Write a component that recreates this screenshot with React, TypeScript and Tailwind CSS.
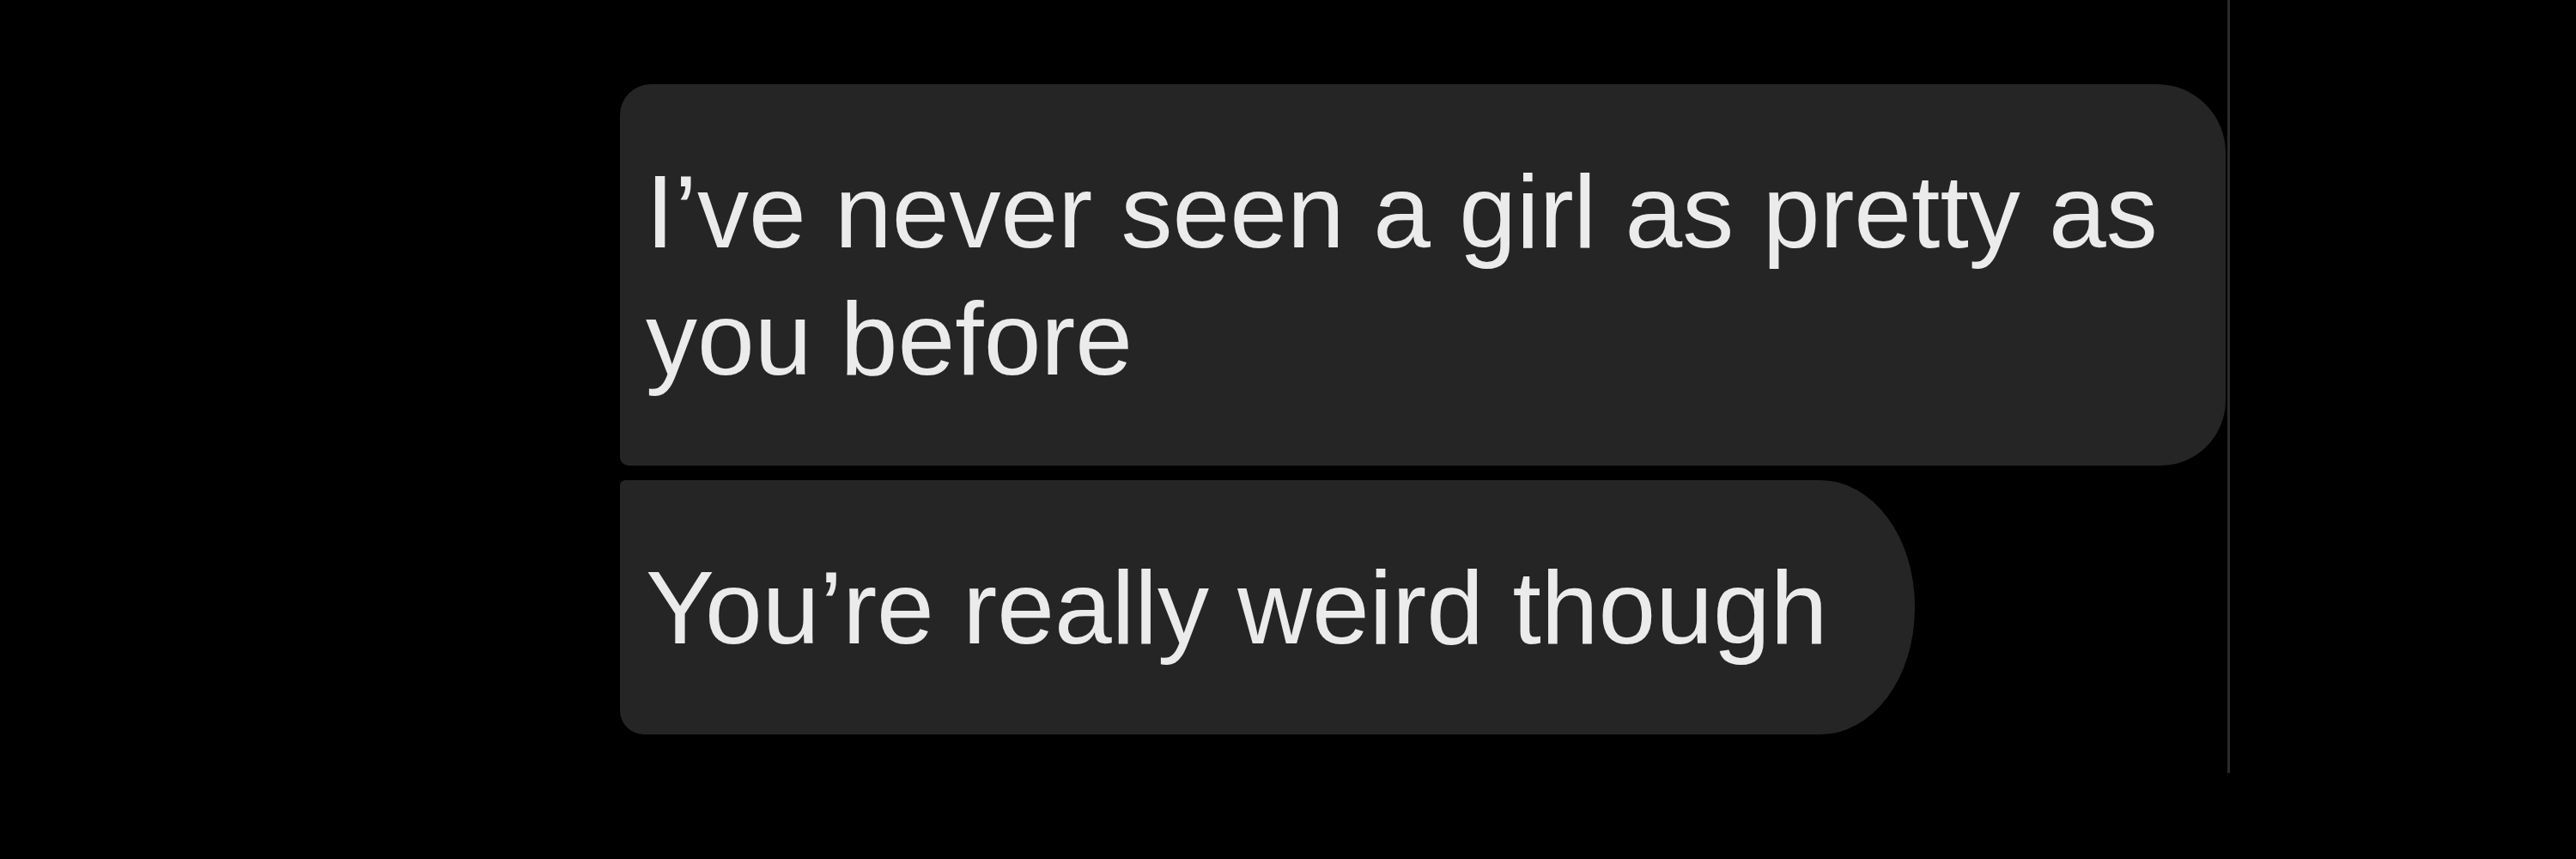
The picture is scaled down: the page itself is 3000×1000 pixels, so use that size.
const messages = [
  {
    id: 1,
    text: 'I’ve never seen a girl as pretty as you before',
    shape: 'w-[1870px] rounded-tl-[36px] rounded-bl-[10px] rounded-tr-[80px] rounded-br-[76px]',
  },
  {
    id: 2,
    text: 'You’re really weird though',
    shape: 'w-[1508px] rounded-tl-[6px] rounded-bl-[28px] rounded-tr-[110px_147px] rounded-br-[110px_147px]',
  },
];

export default function App() {
  return (
    <div className="flex h-[1000px] w-[3000px] overflow-hidden bg-black font-['Liberation_Sans',Arial,sans-serif]">
      <div className="w-[722px] shrink-0" />

      {/* thread column, cut off by the screenshot edge on the right */}
      <div className="flex h-[900px] w-[1875px] shrink-0 flex-col gap-[17px] border-r-[3px] border-[#2b2b2d] pt-[98px]">
        {messages.map((m) => (
          <div
            key={m.id}
            className={`${m.shape} bg-[#252525] pb-[74px] pl-[30px] pr-[40px] pt-[74px] text-[120px] leading-[148px] text-[#ebebeb]`}
          >
            {m.text}
          </div>
        ))}
        <div className="mt-auto mb-[28px] ml-[88px] h-[4px] w-[4px] rounded-full bg-[#9a9a9a]" />
      </div>

      <div className="flex-1" />
    </div>
  );
}
